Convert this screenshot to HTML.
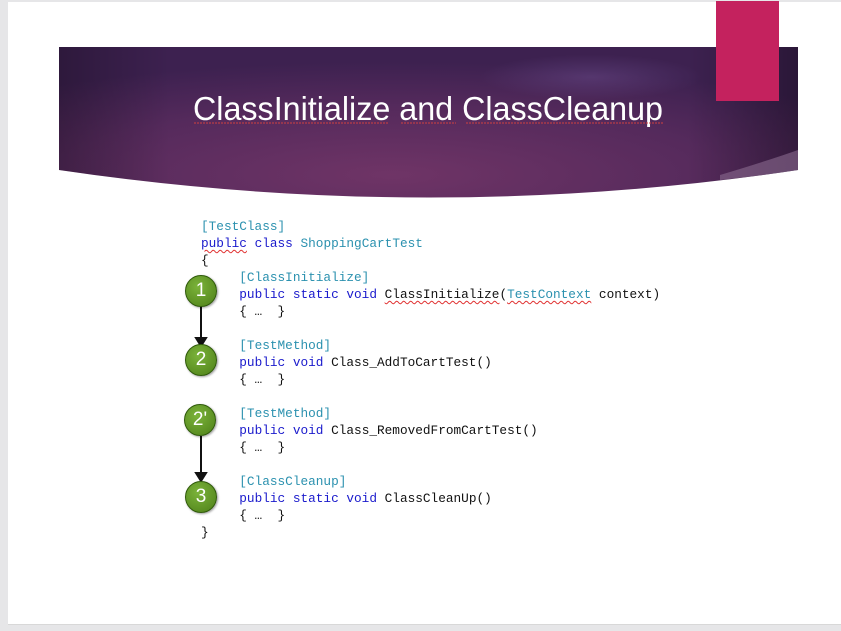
<!DOCTYPE html>
<html><head><meta charset="utf-8"><style>
body{margin:0;width:841px;height:631px;background:#e6e6e8;position:relative;overflow:hidden;font-family:"Liberation Sans",sans-serif}
.slide{position:absolute;left:8px;top:2px;width:833px;height:622px;background:#fff;border-bottom:1px solid #d8d8d8}
.code{position:absolute;left:201px;top:218px;font-family:"Liberation Mono",monospace;font-size:12.75px;line-height:17px;white-space:pre;color:#111;margin:0}
.k{color:#1a1acc}.t{color:#2b91af}
.u{text-decoration:underline wavy #e03030;text-decoration-thickness:1px;text-underline-offset:2px}
.c{position:absolute;width:30px;height:30px;border-radius:50%;background:radial-gradient(circle at 40% 35%,#7bb33a,#4d7f18);border:1.5px solid #2f5a0a;color:#fff;font-size:19px;text-align:center;line-height:30px;box-shadow:1px 1px 2px rgba(0,0,0,.4)}
</style></head><body>
<div class="slide"></div>
<svg style="position:absolute;left:0;top:0" width="841" height="631">
<defs><radialGradient id="g" cx="0.45" cy="0.85" r="0.75"><stop offset="0" stop-color="#6f3466"/><stop offset="0.6" stop-color="#552a5c"/><stop offset="1" stop-color="#3d2150"/></radialGradient>
<radialGradient id="s" cx="0.72" cy="0.2" r="0.15"><stop offset="0" stop-color="#6a4a8a" stop-opacity=".5"/><stop offset="1" stop-color="#6a4a8a" stop-opacity="0"/></radialGradient>
<linearGradient id="h" x1="0" x2="1"><stop offset="0" stop-color="#000" stop-opacity=".25"/><stop offset=".15" stop-color="#000" stop-opacity="0"/><stop offset=".85" stop-color="#000" stop-opacity="0"/><stop offset="1" stop-color="#000" stop-opacity=".3"/></linearGradient></defs>
<path d="M59 47 H798 V170 Q430 225 59 170 Z" fill="url(#g)"/>
<path d="M59 47 H798 V170 Q430 225 59 170 Z" fill="url(#s)"/>
<path d="M59 47 H798 V170 Q430 225 59 170 Z" fill="url(#h)"/>
<path d="M720 175 Q770 160 798 150 V170 Q760 176 720 180 Z" fill="#8a6a90" opacity=".6"/>
<rect x="716" y="1" width="63" height="100" fill="#c4225e"/>
<text x="428" y="120" text-anchor="middle" fill="#fff" font-family="Liberation Sans" font-size="33" textLength="470" lengthAdjust="spacingAndGlyphs">ClassInitialize and ClassCleanup</text>
<path d="M194 123 H388 M401 123 H456 M466 123 H664" stroke="#d04040" stroke-width="1" stroke-dasharray="2 1"/>
<g stroke="#111" stroke-width="2" fill="#111">
<line x1="201" y1="306" x2="201" y2="340"/><path d="M196 338 L201 346 L206 338 Z"/>
<line x1="201" y1="436" x2="201" y2="475"/><path d="M196 473 L201 481 L206 473 Z"/>
</g>
</svg>
<pre class="code"><span class="t">[TestClass]</span>
<span class="k u">public</span> <span class="k">class</span> <span class="t">ShoppingCartTest</span>
{
     <span class="t">[ClassInitialize]</span>
     <span class="k">public static void</span> <span class="u">ClassInitialize</span>(<span class="t u">TestContext</span> context)
     { …  }

     <span class="t">[TestMethod]</span>
     <span class="k">public void</span> Class_AddToCartTest()
     { …  }

     <span class="t">[TestMethod]</span>
     <span class="k">public void</span> Class_RemovedFromCartTest()
     { …  }

     <span class="t">[ClassCleanup]</span>
     <span class="k">public static void</span> ClassCleanUp()
     { …  }
}</pre>
<div class="c" style="left:185px;top:275px">1</div>
<div class="c" style="left:185px;top:344px">2</div>
<div class="c" style="left:184px;top:404px">2'</div>
<div class="c" style="left:185px;top:481px">3</div>
</body></html>
